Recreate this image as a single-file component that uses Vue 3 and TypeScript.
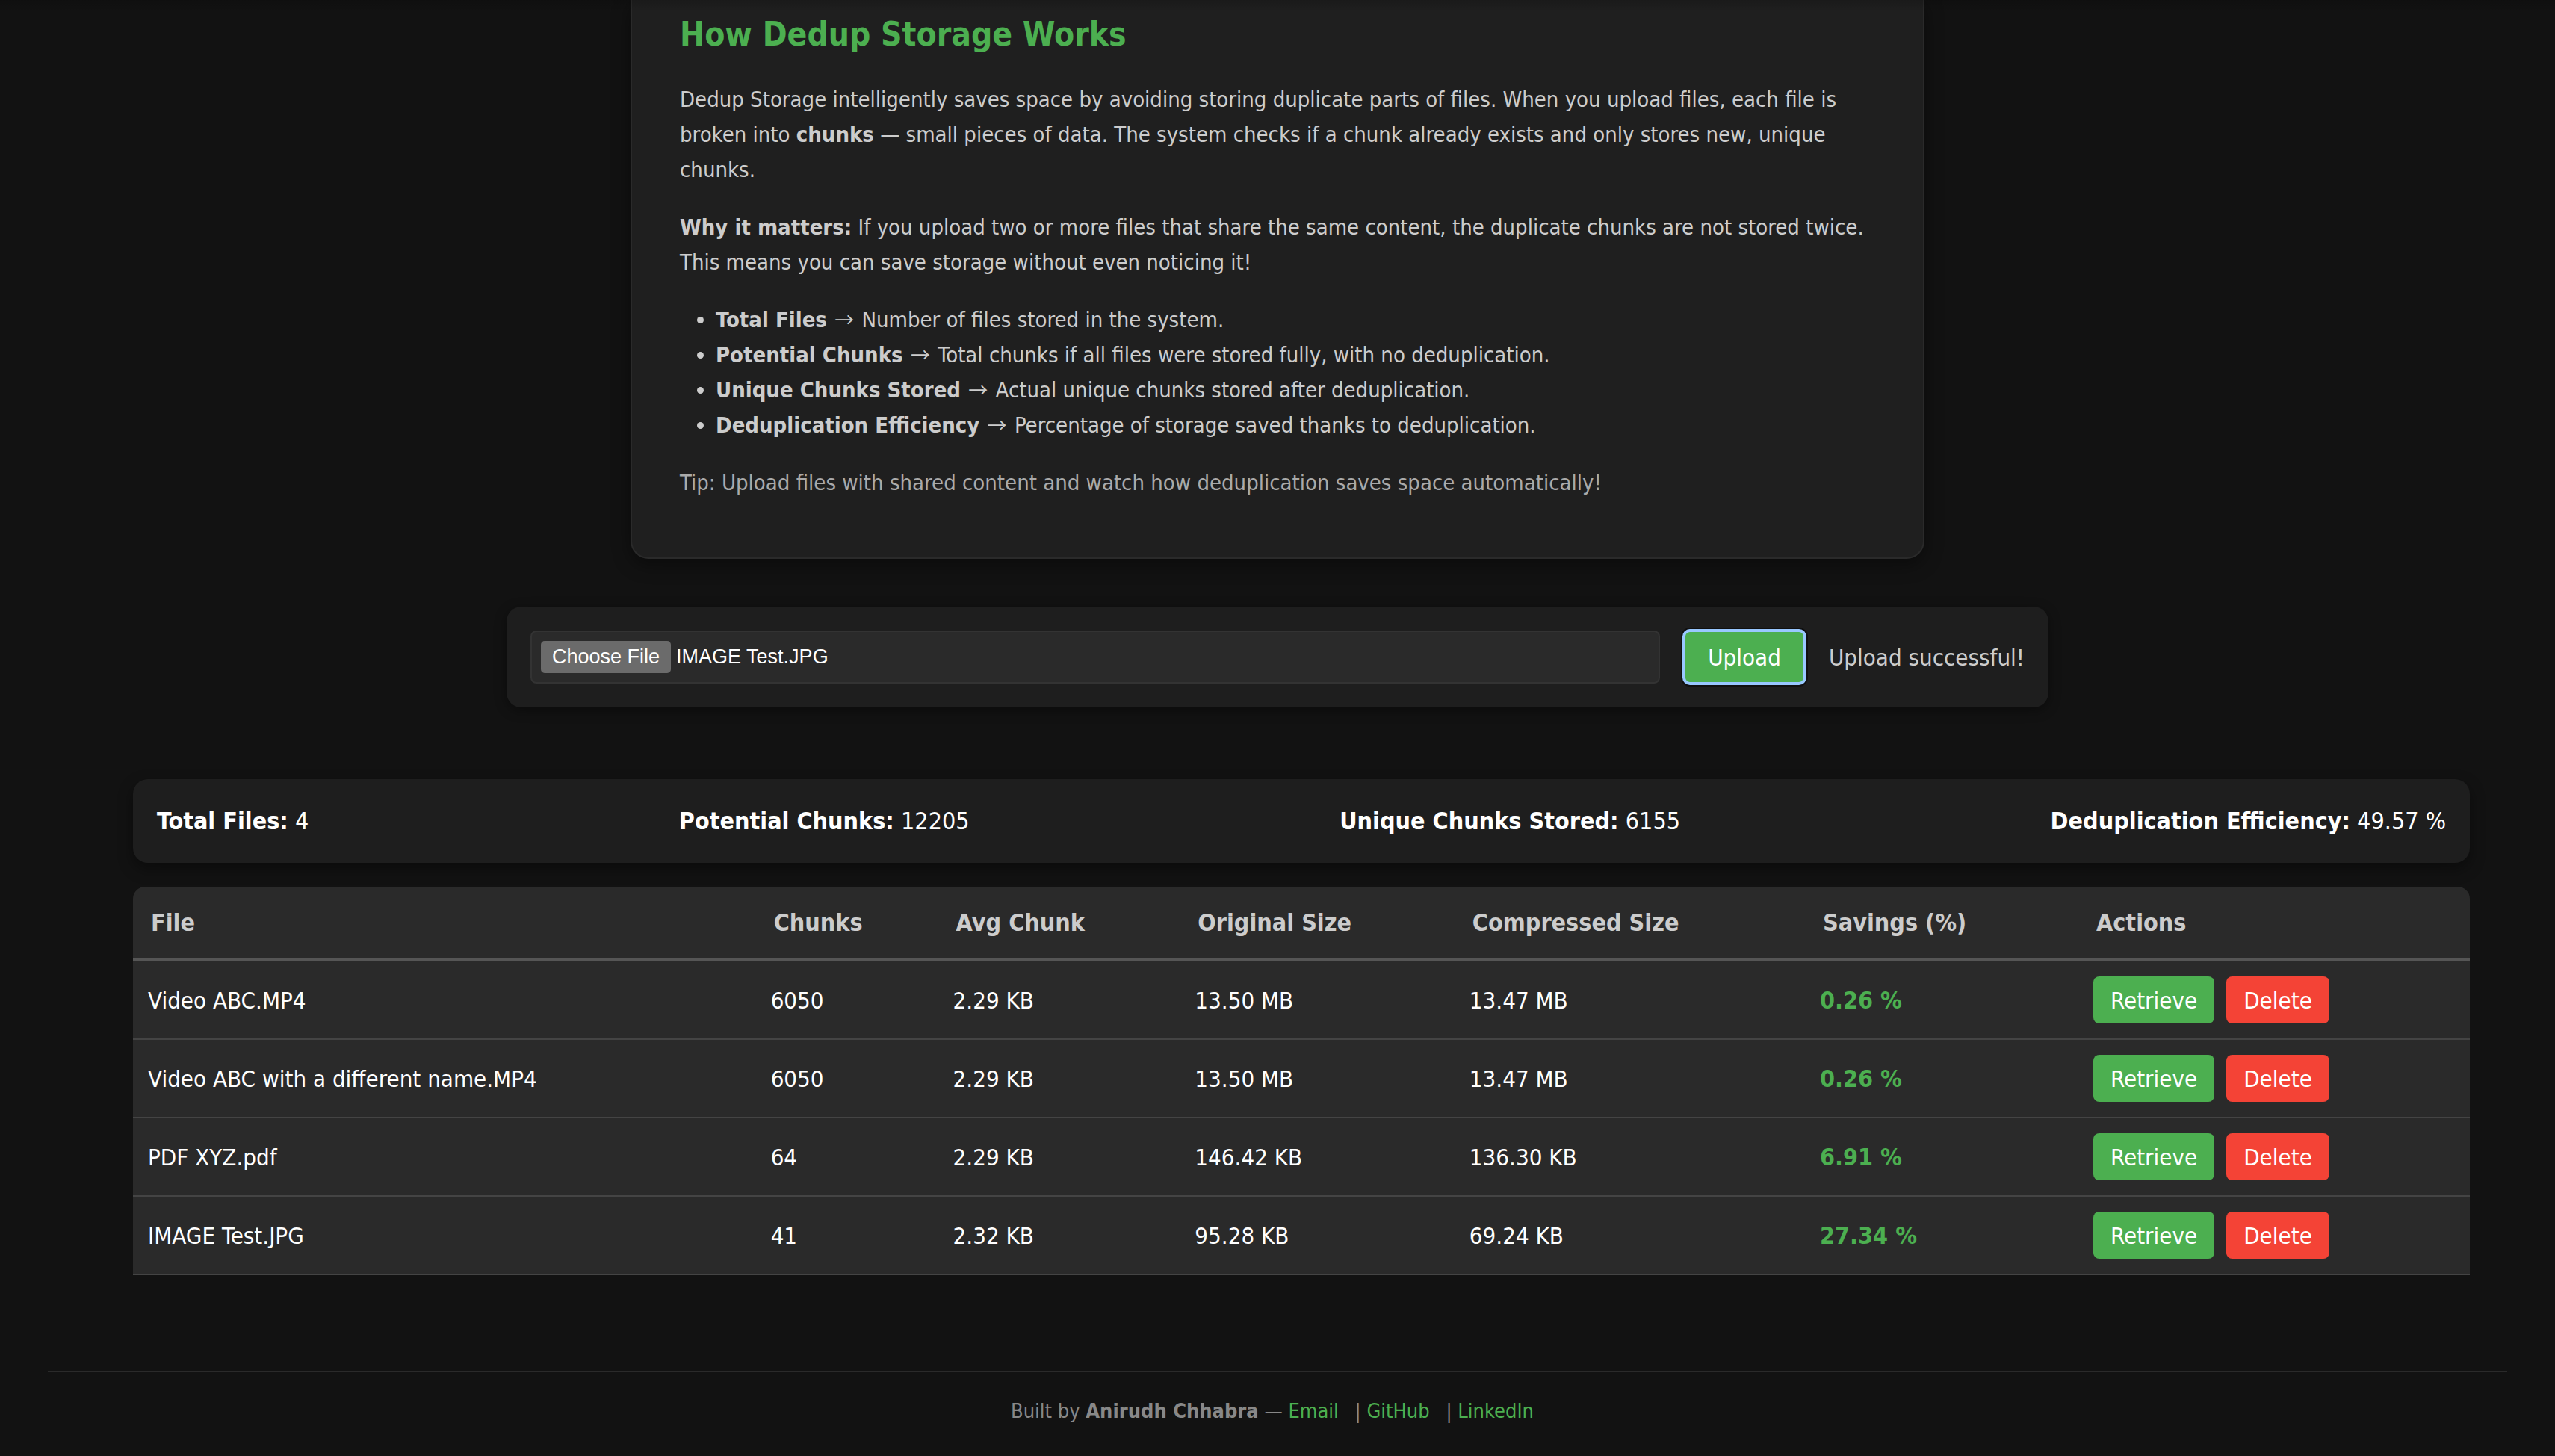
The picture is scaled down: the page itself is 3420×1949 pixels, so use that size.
<script setup lang="ts">
import { onMounted, ref } from 'vue'

interface StoredFile {
  name: string
  chunks: number
  avgChunk: string
  original: string
  compressed: string
  savings: string
}

interface Labelled {
  label: string
  text: string
}

const metrics: Labelled[] = [
  { label: 'Total Files', text: 'Number of files stored in the system.' },
  { label: 'Potential Chunks', text: 'Total chunks if all files were stored fully, with no deduplication.' },
  { label: 'Unique Chunks Stored', text: 'Actual unique chunks stored after deduplication.' },
  { label: 'Deduplication Efficiency', text: 'Percentage of storage saved thanks to deduplication.' },
]

const stats: Labelled[] = [
  { label: 'Total Files:', text: '4' },
  { label: 'Potential Chunks:', text: '12205' },
  { label: 'Unique Chunks Stored:', text: '6155' },
  { label: 'Deduplication Efficiency:', text: '49.57 %' },
]

const files = ref<StoredFile[]>([
  { name: 'Video ABC.MP4', chunks: 6050, avgChunk: '2.29 KB', original: '13.50 MB', compressed: '13.47 MB', savings: '0.26 %' },
  { name: 'Video ABC with a different name.MP4', chunks: 6050, avgChunk: '2.29 KB', original: '13.50 MB', compressed: '13.47 MB', savings: '0.26 %' },
  { name: 'PDF XYZ.pdf', chunks: 64, avgChunk: '2.29 KB', original: '146.42 KB', compressed: '136.30 KB', savings: '6.91 %' },
  { name: 'IMAGE Test.JPG', chunks: 41, avgChunk: '2.32 KB', original: '95.28 KB', compressed: '69.24 KB', savings: '27.34 %' },
])

const picker = ref<HTMLInputElement | null>(null)
const status = ref('Upload successful!')

onMounted(() => {
  const transfer = new DataTransfer()
  transfer.items.add(new File([''], 'IMAGE Test.JPG', { type: 'image/jpeg' }))
  if (picker.value) picker.value.files = transfer.files
})

function removeFile(index: number) {
  files.value.splice(index, 1)
}
</script>

<template>
  <div class="page">
    <main>
      <section class="about">
        <h2>How Dedup Storage Works</h2>
        <p>
          Dedup Storage intelligently saves space by avoiding storing duplicate parts of files. When you upload files,
          each file is broken into <strong>chunks</strong> — small pieces of data. The system checks if a chunk already
          exists and only stores new, unique chunks.
        </p>
        <p>
          <strong>Why it matters:</strong> If you upload two or more files that share the same content, the duplicate
          chunks are not stored twice. This means you can save storage without even noticing it!
        </p>
        <ul>
          <li v-for="m in metrics" :key="m.label">
            <strong>{{ m.label }}</strong> <span class="arrow">→</span> {{ m.text }}
          </li>
        </ul>
        <p class="tip">Tip: Upload files with shared content and watch how deduplication saves space automatically!</p>
      </section>

      <form class="upload" @submit.prevent>
        <input ref="picker" type="file" aria-label="File to upload" />
        <button type="submit" class="submit">Upload</button>
        <span class="status" role="status">{{ status }}</span>
      </form>

      <section class="storage">
        <div class="stats">
          <div v-for="s in stats" :key="s.label">
            <strong>{{ s.label }}</strong> {{ s.text }}
          </div>
        </div>

        <table>
          <colgroup>
            <col class="col-file" />
            <col class="col-chunks" />
            <col class="col-avg" />
            <col class="col-original" />
            <col class="col-compressed" />
            <col class="col-savings" />
            <col class="col-actions" />
          </colgroup>
          <thead>
            <tr>
              <th scope="col">File</th>
              <th scope="col">Chunks</th>
              <th scope="col">Avg Chunk</th>
              <th scope="col">Original Size</th>
              <th scope="col">Compressed Size</th>
              <th scope="col">Savings (%)</th>
              <th scope="col">Actions</th>
            </tr>
          </thead>
          <tbody>
            <tr v-for="(f, i) in files" :key="f.name">
              <td>{{ f.name }}</td>
              <td>{{ f.chunks }}</td>
              <td>{{ f.avgChunk }}</td>
              <td>{{ f.original }}</td>
              <td>{{ f.compressed }}</td>
              <td class="savings">{{ f.savings }}</td>
              <td>
                <div class="actions">
                  <button type="button" class="retrieve">Retrieve</button>
                  <button type="button" class="delete" @click="removeFile(i)">Delete</button>
                </div>
              </td>
            </tr>
          </tbody>
        </table>
      </section>
    </main>

    <footer>
      Built by <strong>Anirudh Chhabra</strong> — <a href="#email">Email</a> | <a href="#github">GitHub</a> |
      <a href="#linkedin">LinkedIn</a>
    </footer>
  </div>
</template>

<style>
body {
  margin: 0;
  background: #121212;
}
</style>

<style scoped>
.page {
  position: relative;
  box-sizing: border-box;
  padding: 0 64px 32px;
  font-family: Tahoma, "DejaVu Sans Condensed", "Noto Sans", sans-serif;
  font-size: 31px;
  line-height: 48px;
  color: #fff;
}

/* Shade cast by the bar above the scrolled content */
.page::before {
  content: "";
  position: absolute;
  inset: 0 0 auto;
  height: 16px;
  background: linear-gradient(rgba(0, 0, 0, 0.16), transparent);
  pointer-events: none;
}

.about {
  box-sizing: border-box;
  max-width: 1732px;
  margin: 0 auto 64px;
  padding: 10px 64px 76px;
  border: 2px solid #2a2a2a;
  border-top: 0;
  border-radius: 0 0 24px 24px;
  background: #1f1f1f;
  box-shadow: 0 8px 24px rgba(0, 0, 0, 0.4);
  color: #ccc;
  font-size: 29px;
  line-height: 47px;
}

h2 {
  margin: 0 0 28px;
  font-size: 44px;
  line-height: 72px;
  color: #4caf50;
}

.about p,
.about ul {
  margin: 0 0 30px;
}

.about ul {
  padding-left: 48px;
}

.arrow {
  margin: 0 2px;
  font-family: "Noto Sans CJK JP", sans-serif;
  font-size: 26px;
  line-height: 1;
}

.about .tip {
  margin: 0;
  color: #aaa;
}

.upload {
  display: flex;
  align-items: center;
  gap: 32px;
  box-sizing: border-box;
  max-width: 2064px;
  margin: 0 auto 96px;
  padding: 32px;
  border-radius: 20px;
  background: #1e1e1e;
  box-shadow: 0 4px 16px rgba(0, 0, 0, 0.4);
}

.upload input {
  flex: 1;
  min-width: 0;
  box-sizing: border-box;
  height: 71px;
  padding: 12px;
  border: 2px solid #333;
  border-radius: 8px;
  background: #2a2a2a;
  color: #fff;
  font-family: "Liberation Sans", Arial, sans-serif;
  font-size: 27px;
  line-height: 43px;
}

.upload input::file-selector-button {
  height: 43px;
  margin: 0 7px 0 0;
  padding: 0 15px;
  border: 0;
  border-radius: 5px;
  background: #6b6b6b;
  color: #fff;
  font: inherit;
}

button {
  border: 0;
  border-radius: 8px;
  color: #fff;
  font-family: inherit;
  font-size: 31px;
  cursor: pointer;
}

.submit {
  height: 71px;
  padding: 0 32px;
  background: #4caf50;
  outline: 4px solid #99c8ff;
  outline-offset: -2px;
  box-shadow: 0 0 0 4px #101010;
}

.status {
  color: #ccc;
}

.storage {
  margin: 0 50px 128px 114px;
}

.stats {
  display: flex;
  justify-content: space-between;
  margin-bottom: 32px;
  padding: 32px;
  border-radius: 20px;
  background: #1e1e1e;
  box-shadow: 0 8px 20px rgba(0, 0, 0, 0.4);
  font-size: 32px;
}

table {
  width: 100%;
  table-layout: fixed;
  border-collapse: separate;
  border-spacing: 0;
  border-radius: 16px 16px 0 0;
  overflow: hidden;
  background: #2a2a2a;
  text-align: left;
}

.col-file { width: 26.65%; }
.col-chunks { width: 7.8%; }
.col-avg { width: 10.35%; }
.col-original { width: 11.75%; }
.col-compressed { width: 15%; }
.col-savings { width: 11.7%; }
.col-actions { width: 16.75%; }

th {
  padding: 24px;
  border-bottom: 4px solid #555;
  color: #ccc;
  font-size: 32px;
}

td {
  padding: 20px;
  border-bottom: 2px solid #444;
}

.savings {
  color: #4caf50;
  font-size: 32px;
  font-weight: bold;
}

.actions {
  display: flex;
  gap: 16px;
}

.actions button {
  height: 63px;
  padding: 0 23px;
}

.retrieve {
  background: #4caf50;
}

.delete {
  background: #f44336;
}

footer {
  padding-top: 30px;
  border-top: 2px solid #2a2a2a;
  color: #888;
  font-size: 27px;
  line-height: 44px;
  text-align: center;
}

footer a {
  margin-right: 14px;
  color: #4caf50;
  text-decoration: none;
}
</style>
